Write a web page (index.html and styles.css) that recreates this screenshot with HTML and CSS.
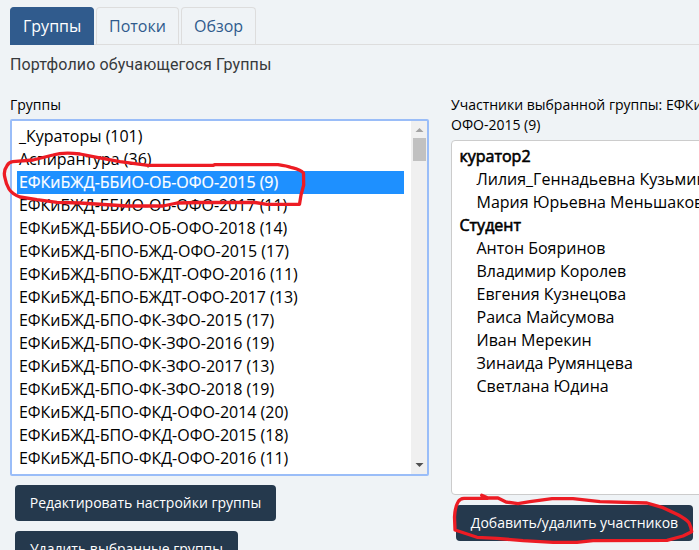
FILE: index.html
```html
<!DOCTYPE html>
<html lang="ru">
<head>
<meta charset="utf-8">
<title>Группы</title>
<link rel="stylesheet" href="styles.css">
</head>
<body>
<nav class="tabs">
  <a class="tab active">Группы</a>
  <a class="tab">Потоки</a>
  <a class="tab overview">Обзор</a>
</nav>
<h1 class="title">Портфолио обучающегося Группы</h1>
<main class="columns">
  <section class="groups">
    <div class="label">Группы</div>
    <div class="listbox">
      <ul class="options">
        <li>_Кураторы (101)</li>
        <li>Аспирантура (36)</li>
        <li class="selected">ЕФКиБЖД-ББИО-ОБ-ОФО-2015 (9)</li>
        <li>ЕФКиБЖД-ББИО-ОБ-ОФО-2017 (11)</li>
        <li>ЕФКиБЖД-ББИО-ОБ-ОФО-2018 (14)</li>
        <li>ЕФКиБЖД-БПО-БЖД-ОФО-2015 (17)</li>
        <li>ЕФКиБЖД-БПО-БЖДТ-ОФО-2016 (11)</li>
        <li>ЕФКиБЖД-БПО-БЖДТ-ОФО-2017 (13)</li>
        <li>ЕФКиБЖД-БПО-ФК-ЗФО-2015 (17)</li>
        <li>ЕФКиБЖД-БПО-ФК-ЗФО-2016 (19)</li>
        <li>ЕФКиБЖД-БПО-ФК-ЗФО-2017 (13)</li>
        <li>ЕФКиБЖД-БПО-ФК-ЗФО-2018 (19)</li>
        <li>ЕФКиБЖД-БПО-ФКД-ОФО-2014 (20)</li>
        <li>ЕФКиБЖД-БПО-ФКД-ОФО-2015 (18)</li>
        <li>ЕФКиБЖД-БПО-ФКД-ОФО-2016 (11)</li>
      </ul>
      <div class="scrollbar">
        <svg width="16" height="17"><path d="M4.500 11h8L8.500 7z" fill="#a3a3a3"/></svg>
        <div class="thumb"></div>
        <svg class="down" width="16" height="17"><path d="M4.500 6h8L8.500 10z" fill="#505050"/></svg>
      </div>
    </div>
    <button class="button edit">Редактировать настройки группы</button>
    <button class="button remove">Удалить выбранные группы</button>
  </section>
  <section class="members">
    <div class="label">Участники выбранной группы: ЕФКиБЖД-ББИО-ОБ-<br>ОФО-2015 (9)</div>
    <div class="listbox">
      <ul class="options">
        <li class="role">куратор2</li>
        <li>Лилия_Геннадьевна Кузьмина</li>
        <li>Мария Юрьевна Меньшакова</li>
        <li class="role">Студент</li>
        <li>Антон Бояринов</li>
        <li>Владимир Королев</li>
        <li>Евгения Кузнецова</li>
        <li>Раиса Майсумова</li>
        <li>Иван Мерекин</li>
        <li>Зинаида Румянцева</li>
        <li>Светлана Юдина</li>
      </ul>
    </div>
    <button class="button add">Добавить/удалить участников</button>
  </section>
</main>
<svg class="marks" width="699" height="550" viewBox="0 0 699 550">
  <path d="M12.700 161.700L33 160L53 155Q63 152 80 154L97 157.300L120 161.700L148 165.300H213L215 164.700H278Q287 166 292 167.700Q301 170 303.500 173L303.700 185L301 195L299.500 204.300H267L255 202.500H200L177 203L163 206H127L80 203L57 202.300L37 199.700L20 197Q12 194 9 189Q6 184 5 178Q3 171 7 165.700Q9 162 12.700 161.700"/>
  <path d="M481.700 495.300L488 498H498L506 502L518 503.700L530 501.700L552 498.700H573L600 501.700L647 503L663 507.700L678 514.700Q686 519 689 522.700Q691 527 691.700 531.700L683 536L667 540.300L593 540.700L577 542.300H553L523 540.700L497 538.300L477 537.300L455 530L454.500 517Q455 507 458 502Q460 498.300 464 498.300H488"/>
</svg>
</body>
</html>
```

FILE: styles.css
```css
* { box-sizing: border-box; }
html { height: 100%; overflow: hidden; }
body {
  margin: 0;
  height: 550px;
  overflow: hidden;
  padding: 7px 0 0 10px;
  background: #eff3f6;
  color: #000;
  font-family: "Open Sans", "Noto Sans", sans-serif;
}
.tabs {
  display: flex;
  gap: 2px;
  height: 38px;
  border-bottom: 1px solid #ddd;
}
.tab {
  width: 83px;
  height: 37px;
  padding-left: 12px;
  border: 1px solid #ddd;
  border-bottom: 0;
  border-radius: 4px 4px 0 0;
  font-size: 16px;
  line-height: 37px;
  color: #305b8d;
  white-space: nowrap;
}
.tab.active {
  width: 84px;
  height: 38px;
  background: #305b8d;
  border-color: #305b8d;
  color: #fff;
}
.tab.overview { width: 75px; }
.title {
  margin: 9px 0 0;
  height: 22px;
  font: 400 16px/22px Roboto, sans-serif;
  letter-spacing: 0.14px;
  color: #373a3c;
}
.columns {
  display: grid;
  grid-template-columns: 419px 286px;
  column-gap: 22px;
  margin-top: 19px;
}
.label {
  height: 24px;
  font-size: 14px;
  line-height: 20px;
  white-space: nowrap;
}
.members .label { height: 45px; }
.listbox {
  display: flex;
  height: 355px;
  padding-left: 6px;
  background: #fff;
  border: 1px solid #ccc;
  border-radius: 4px;
  font-size: 16px;
  line-height: 23px;
  white-space: nowrap;
}
.groups .listbox {
  height: 357px;
  margin-bottom: -1px;
  justify-content: space-between;
  padding-left: 5px;
  border: 2px solid #9abdf8;
  border-radius: 2px;
}
.options {
  flex: none;
  margin: 0;
  padding: 4px 0 0;
  list-style: none;
}
.groups .options { width: 387px; }
.options li { height: 23px; padding-left: 2px; }
.groups .options li { letter-spacing: -0.02px; }
.selected {
  background: #1e90ff;
  color: #fff;
  -webkit-text-stroke: 0.2px #fff;
}
.members .options li { padding-left: 18.5px; }
.members .options .role {
  padding-left: 1.5px;
  -webkit-text-stroke: 0.6px #000;
}
.scrollbar {
  display: flex;
  flex-direction: column;
  width: 16px;
  background: #f0f0f0;
}
.scrollbar svg { display: block; }
.thumb {
  width: 13px;
  height: 23px;
  margin-left: 2px;
  background: #c1c1c1;
}
.down { margin-top: auto; }
.button {
  display: block;
  height: 36px;
  margin: 10px 0 0 5px;
  padding: 0 0 1px;
  border: 0;
  border-radius: 4px;
  background: #25394d;
  color: #fff;
  font: 400 14px/20px "Open Sans", "Noto Sans", sans-serif;
  white-space: nowrap;
}
.edit { width: 261px; }
.remove { width: 223px; }
.add { width: 237px; }
.marks {
  position: absolute;
  top: 0;
  left: 0;
  fill: none;
  stroke: #ed1c24;
  stroke-width: 3.3;
  stroke-linecap: round;
  stroke-linejoin: round;
}
```
